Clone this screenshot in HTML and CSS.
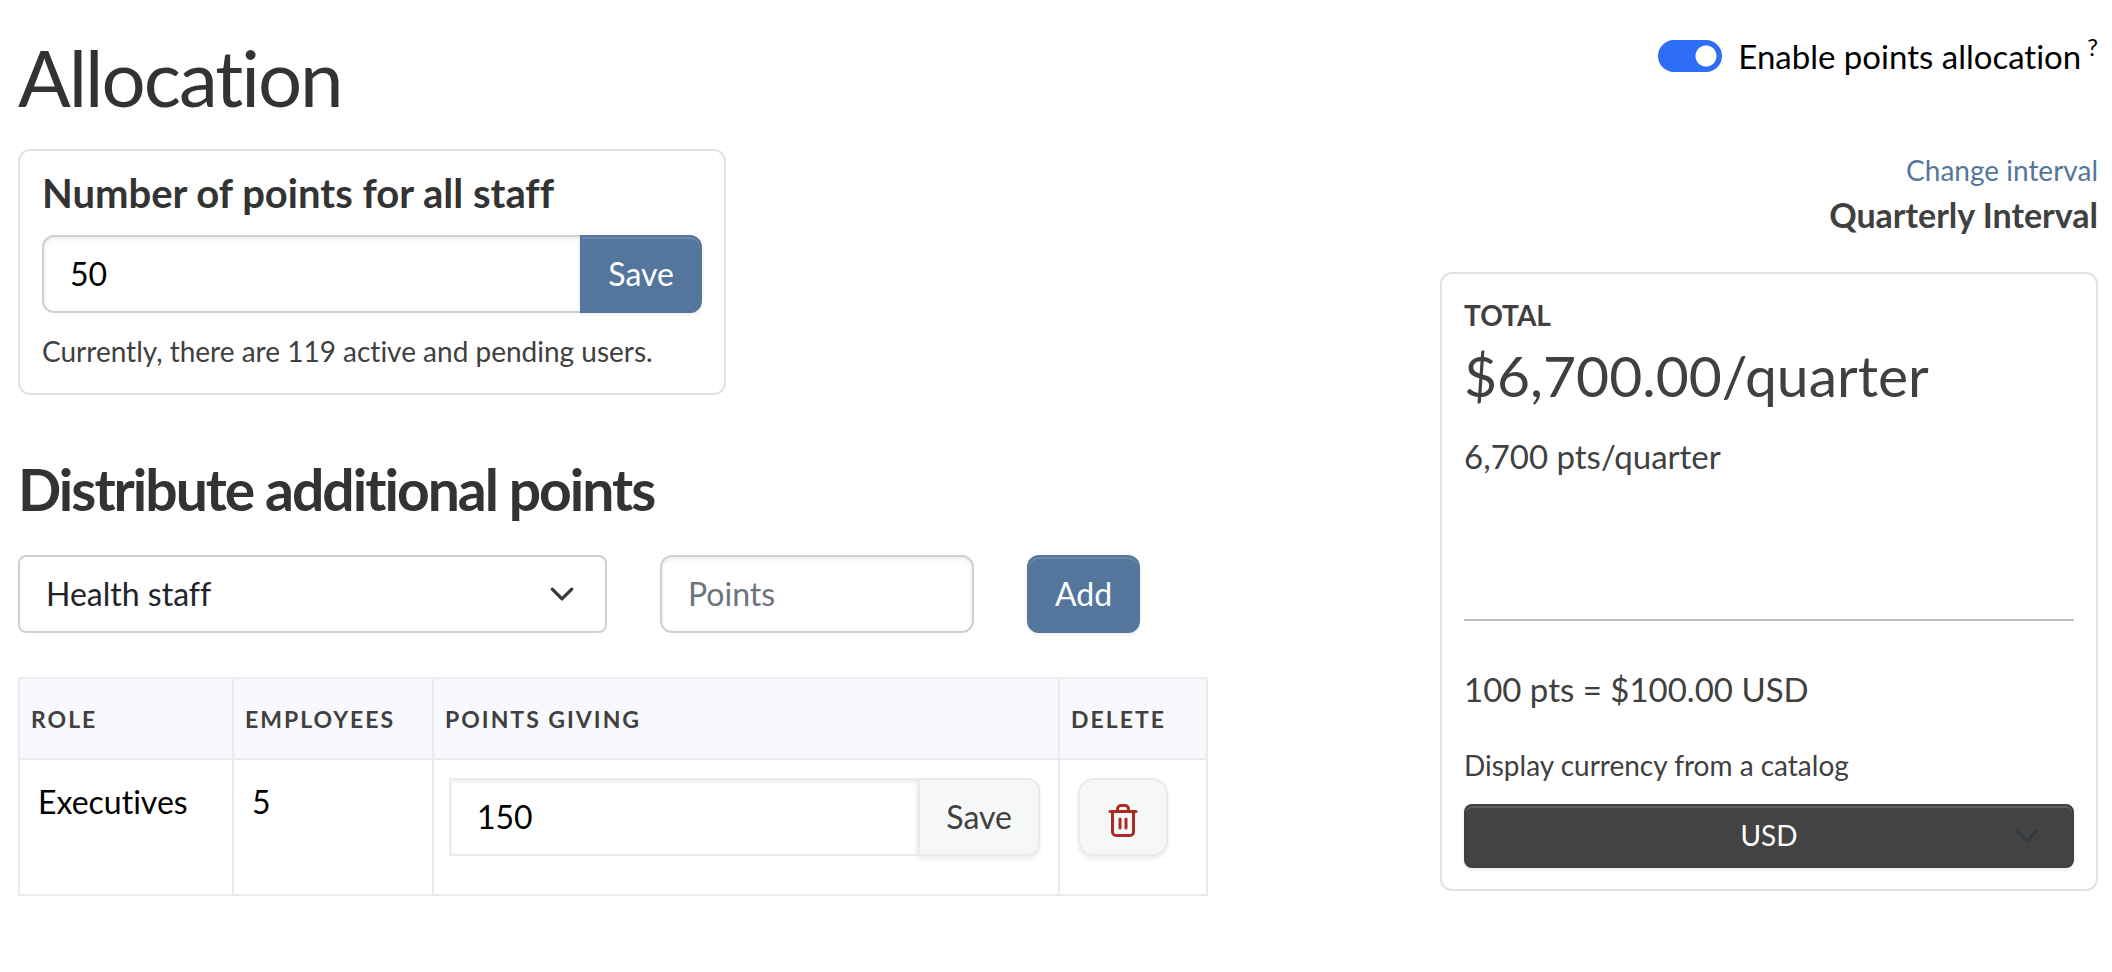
FILE: index.html
```
<!DOCTYPE html>
<html lang="en">
<head>
<meta charset="UTF-8">
<meta name="viewport" content="width=device-width, initial-scale=1.0">
<title>Allocation</title>
<link rel="stylesheet" href="styles.css">
</head>
<body>

<main class="allocation">
  <!-- Points settings -->
  <section class="allocation-main">
    <h1>Allocation</h1>

    <form class="card points-card">
      <h3><label for="staff-points">Number of points for all staff</label></h3>
      <div class="input-group">
        <input type="text" id="staff-points" class="form-control" value="50">
        <button type="button" class="btn btn-primary">Save</button>
      </div>
      <p class="hint">Currently, there are 119 active and pending users.</p>
    </form>

    <h2>Distribute additional points</h2>

    <form class="distribute-form">
      <select class="form-control role-select" aria-label="Role">
        <option>Health staff</option>
      </select>
      <input type="text" class="form-control points-input" placeholder="Points" aria-label="Points">
      <button type="button" class="btn btn-primary">Add</button>
    </form>

    <table class="roles-table">
      <colgroup>
        <col class="col-role">
        <col class="col-employees">
        <col class="col-points">
        <col class="col-delete">
      </colgroup>
      <thead>
        <tr>
          <th>Role</th>
          <th>Employees</th>
          <th>Points giving</th>
          <th>Delete</th>
        </tr>
      </thead>
      <tbody>
        <tr>
          <td>Executives</td>
          <td>5</td>
          <td class="cell-controls">
            <div class="input-group">
              <input type="text" class="form-control" value="150" aria-label="Points giving">
              <button type="button" class="btn btn-light">Save</button>
            </div>
          </td>
          <td class="cell-delete">
            <button type="button" class="btn btn-light btn-delete" aria-label="Delete">
              <svg width="30" height="34" viewBox="0 0 30 34" fill="none" stroke="#b02a25" stroke-width="3" stroke-linecap="round" stroke-linejoin="round">
                <path d="M2 8.500H28"/>
                <path d="M9.500 8V6a3.500 3.500 0 0 1 3.500-3.500h4A3.500 3.500 0 0 1 20.500 6v2"/>
                <path d="M4.500 8.500V29a3.500 3.500 0 0 0 3.500 3.500h14a3.500 3.500 0 0 0 3.500-3.500V8.500"/>
                <path d="M12 16v9M18 16v9"/>
              </svg>
            </button>
          </td>
        </tr>
      </tbody>
    </table>
  </section>

  <!-- Total -->
  <aside class="allocation-side">
    <div class="switch-row">
      <input type="checkbox" role="switch" id="enable-points" class="switch" checked>
      <label for="enable-points">Enable points allocation</label>
      <sup>?</sup>
    </div>

    <div class="interval">
      <a href="#">Change interval</a>
      <strong>Quarterly Interval</strong>
    </div>

    <div class="card total-card">
      <div class="total-label">Total</div>
      <div class="total-amount">$6,700.00/quarter</div>
      <div class="total-points">6,700 pts/quarter</div>
      <hr>
      <div class="rate">100 pts = $100.00 USD</div>
      <label class="currency-label" for="currency">Display currency from a catalog</label>
      <select id="currency" class="currency-select">
        <option>USD</option>
      </select>
    </div>
  </aside>
</main>

</body>
</html>
```
FILE: styles.css
```
* {
  box-sizing: border-box;
}

body {
  margin: 0;
  background: #fff;
  color: #404040;
  font-family: Lato, sans-serif;
  font-size: 32px;
  line-height: 48px;
  font-variant-ligatures: none;
}

h1, h2, h3, p {
  margin: 0;
  color: #333;
}

input, select, button {
  font-family: inherit;
  font-size: 32px;
  font-variant-ligatures: none;
  margin: 0;
}

.allocation {
  display: grid;
  grid-template-columns: 1190fr 658fr;
  column-gap: 232px;
  align-items: start;
  padding: 31px 14px 0 18px;
}

/* Headings */
h1 {
  font-size: 78px;
  line-height: 92px;
  font-weight: 400;
  letter-spacing: -2px;
  margin-bottom: 26px;
}

h2 {
  font-size: 57px;
  line-height: 70px;
  font-weight: 700;
  letter-spacing: -2px;
  margin: 59px 0 31px;
}

h3 {
  font-size: 40px;
  line-height: 48px;
  font-weight: 700;
  margin-bottom: 18px;
}

/* Cards */
.card {
  border: 2px solid #e2e2e2;
  border-radius: 12px;
  padding: 18px 22px 21px;
}

.points-card {
  max-width: 708px;
}

.hint {
  margin-top: 17px;
  color: #404040;
  font-size: 28px;
  line-height: 42px;
}

/* Form controls */
.form-control {
  height: 78px;
  min-width: 0;
  padding: 0 26px 2px;
  border: 2px solid #cdd1d5;
  border-radius: 12px;
  background: #fff;
  color: #000;
  box-shadow: inset 0 2px 4px rgba(0, 0, 0, 0.08);
}

.form-control::placeholder {
  color: #6c757d;
  opacity: 1;
}

.btn {
  height: 78px;
  padding: 0 26px 2px;
  border: 2px solid;
  border-radius: 12px;
  cursor: pointer;
}

.btn-primary {
  background: #54769d;
  border-color: #54769d;
  color: #fff;
  box-shadow: inset 0 2px 0 rgba(255, 255, 255, 0.15), 0 2px 4px rgba(0, 0, 0, 0.08);
}

.btn-light {
  background: #f6f8f8;
  border-color: #e9ebed;
  color: #404040;
  box-shadow: 0 3px 4px rgba(0, 0, 0, 0.08);
}

.input-group {
  display: flex;
}

.input-group .form-control {
  flex: 1;
  border-right: 0;
  border-radius: 12px 0 0 12px;
}

.input-group .btn {
  border-radius: 0 12px 12px 0;
}

.distribute-form {
  display: flex;
  gap: 53px;
}

.role-select {
  flex: 0 1 589px;
  appearance: none;
  border-radius: 8px;
  color: #212529;
  box-shadow: none;
  background: #fff url("data:image/svg+xml,%3Csvg xmlns='http://www.w3.org/2000/svg' viewBox='0 0 16 16'%3E%3Cpath fill='none' stroke='%23343a40' stroke-linecap='round' stroke-linejoin='round' stroke-width='2' d='M2 5l6 6 6-6'/%3E%3C/svg%3E") no-repeat right 30px center / 26px;
}

.points-input {
  flex: 0 1 314px;
}

/* Roles table */
.roles-table {
  width: 100%;
  margin-top: 44px;
  table-layout: fixed;
  border-collapse: collapse;
  color: #000;
}

.col-role {
  width: 214px;
}

.col-employees {
  width: 200px;
}

.col-delete {
  width: 148px;
}

.roles-table th,
.roles-table td {
  border: 2px solid #e9ebed;
  text-align: left;
  vertical-align: top;
}

.roles-table th {
  padding: 16px 11px 15px;
  background: #f8f9fd;
  color: #404040;
  font-size: 23px;
  font-weight: 700;
  letter-spacing: 2px;
  text-transform: uppercase;
}

.roles-table td {
  padding: 18px 18px 38px;
}

.roles-table .cell-controls {
  padding-left: 15px;
}

.cell-controls .form-control {
  border-color: #e9ebed;
  border-radius: 0;
}

.btn-delete {
  display: flex;
  align-items: center;
  justify-content: center;
  width: 90px;
  padding: 6px 0 0;
  border-radius: 16px;
}

/* Side column */
.switch-row {
  display: flex;
  align-items: center;
  justify-content: flex-end;
  color: #000;
  font-size: 33px;
  line-height: 50px;
}

.switch {
  appearance: none;
  width: 64px;
  height: 32px;
  margin-right: 16px;
  border-radius: 16px;
  background: #2f6df6 radial-gradient(circle, #fff 10px, transparent 11px) no-repeat 16px 0;
}

.switch-row sup {
  align-self: flex-start;
  margin-left: 6px;
  font-size: 24px;
  line-height: 32px;
}

.interval {
  display: flex;
  flex-direction: column;
  align-items: flex-end;
  margin: 69px 0 32px;
}

.interval a {
  color: #54769d;
  font-size: 28px;
  line-height: 40px;
  text-decoration: none;
}

.interval strong {
  font-size: 34px;
  line-height: 50px;
}

.total-label {
  margin-top: 2px;
  font-size: 28px;
  line-height: 42px;
  font-weight: 700;
  text-transform: uppercase;
}

.total-amount {
  margin: 4px 0 21px;
  font-size: 57px;
  line-height: 70px;
}

.total-points,
.rate {
  font-size: 33px;
  line-height: 50px;
}

.total-card hr {
  margin: 138px 0 43px;
  border: 0;
  border-top: 2px solid #bfbfbf;
}

.currency-label {
  display: block;
  margin: 30px 0 18px;
  font-size: 28px;
  line-height: 42px;
}

.currency-select {
  display: block;
  width: 100%;
  height: 64px;
  padding: 0 32px 2px;
  appearance: none;
  border: 2px solid #404040;
  border-radius: 8px;
  color: #fff;
  font-size: 28px;
  text-align: center;
  text-align-last: center;
  box-shadow: inset 0 2px 0 rgba(255, 255, 255, 0.15), 0 2px 4px rgba(0, 0, 0, 0.08);
  background: #434343 url("data:image/svg+xml,%3Csvg xmlns='http://www.w3.org/2000/svg' viewBox='0 0 16 16'%3E%3Cpath fill='none' stroke='%23343a40' stroke-linecap='round' stroke-linejoin='round' stroke-width='2' d='M2 5l6 6 6-6'/%3E%3C/svg%3E") no-repeat right 32px center / 26px;
}
```
